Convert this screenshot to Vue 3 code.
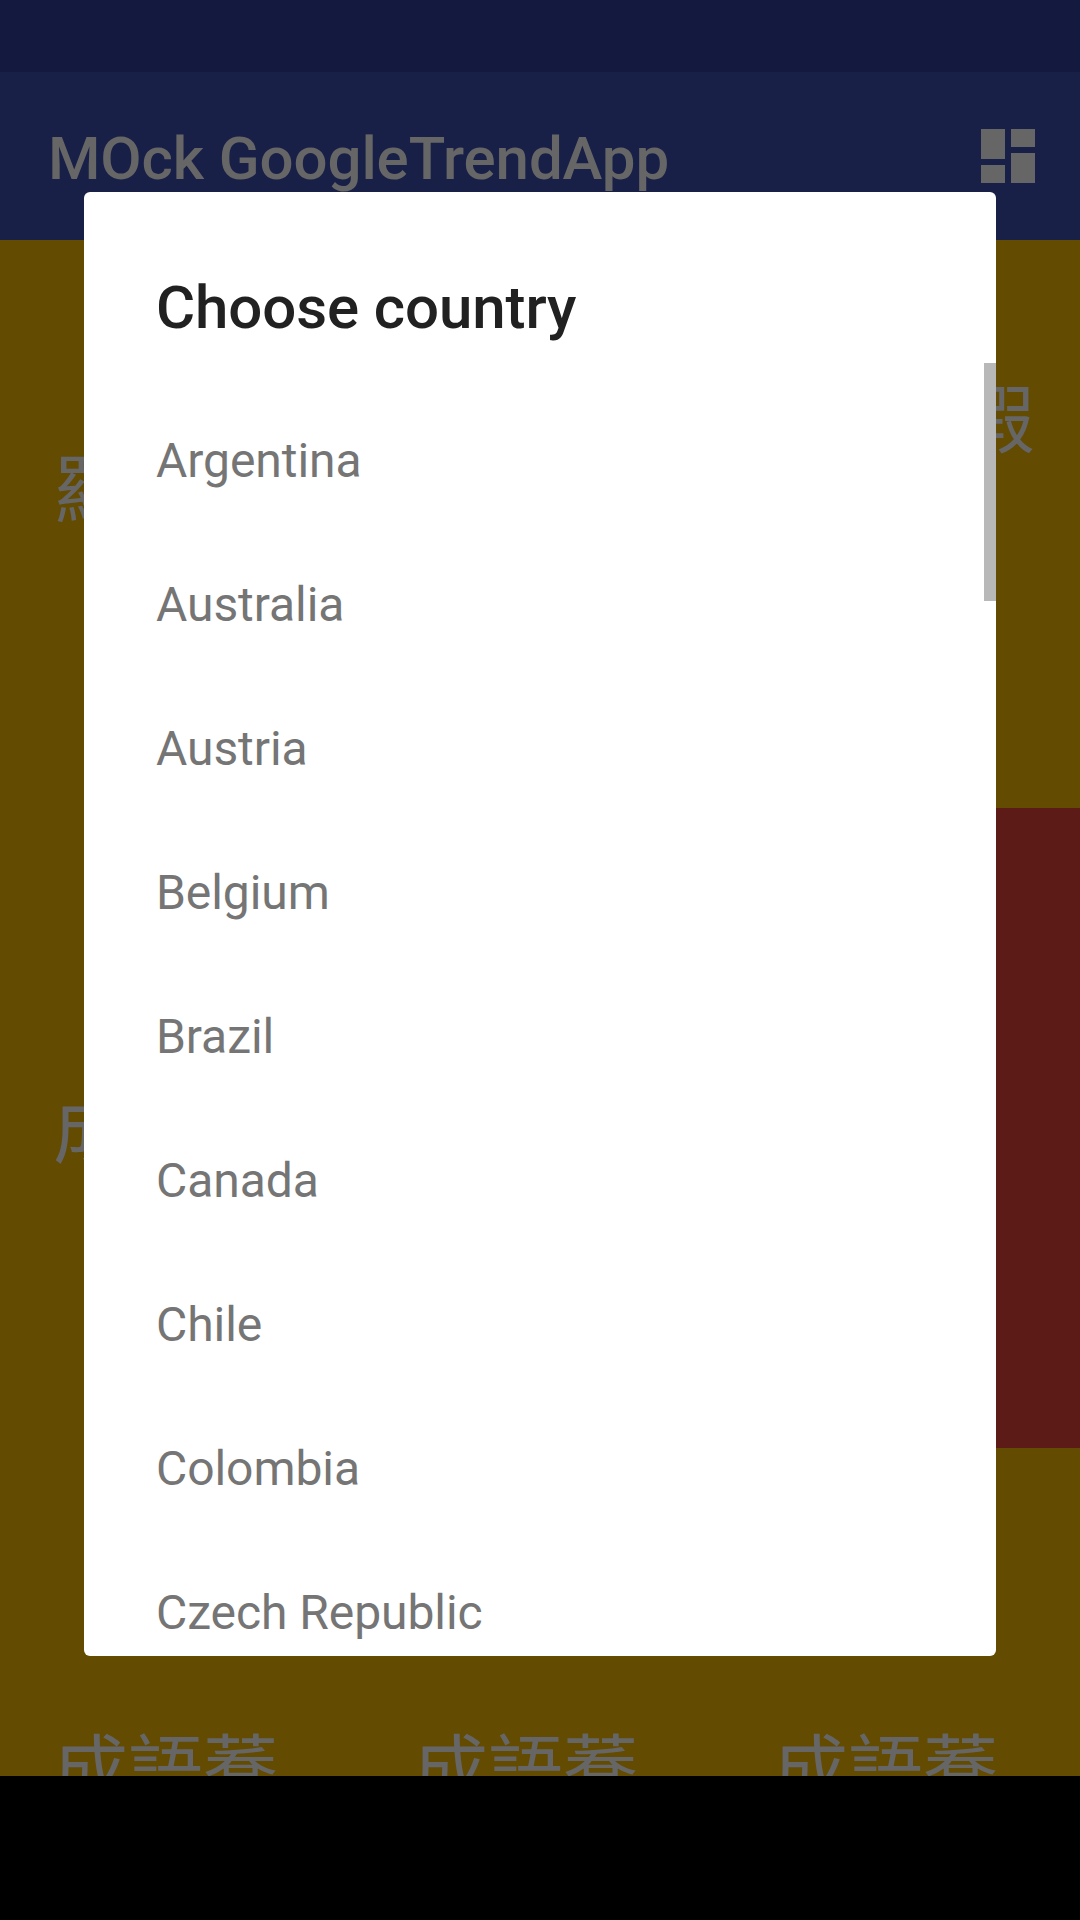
<script setup>
const countries = ['Argentina', 'Australia', 'Austria', 'Belgium', 'Brazil', 'Canada', 'Chile', 'Colombia', 'Czech Republic']
const tiles = ['成語蕎', '成語蕎', '成語蕎']
</script>

<template>
  <div class="screen">
    <div class="status"></div>
    <header class="bar">
      <h1>MOck GoogleTrendApp</h1>
      <svg class="dash" viewBox="0 0 54 54"><path d="M0 0h24v30H0zM30 0h24v18H30zM0 36h24v18H0zM30 24h24v30H30z" /></svg>
    </header>
    <main class="grid">
      <span class="word w1">羅</span>
      <span class="word w2">假</span>
      <span class="word w3">成</span>
      <div class="red"></div>
      <div class="row"><span v-for="(t, i) in tiles" :key="i" class="tile">{{ t }}</span></div>
    </main>
    <footer class="nav"></footer>
    <section class="dialog">
      <h2>Choose country</h2>
      <ul><li v-for="c in countries" :key="c">{{ c }}</li></ul>
      <div class="thumb"></div>
    </section>
  </div>
</template>

<style>
body { margin: 0; background: #000; }
</style>
<style scoped>
.screen { position: relative; width: 1080px; height: 1920px; overflow: hidden; display: flex; flex-direction: column; font-family: Roboto, "Noto Sans CJK TC", sans-serif; }
.status { height: 72px; background: #13193f; flex: none; }
.bar { height: 168px; flex: none; box-sizing: border-box; background: #192048; padding: 0 45px 0 48px; display: flex; align-items: center; justify-content: space-between; color: #666; }
h1 { margin: 0; padding-top: 6px; font-size: 60px; font-weight: 500; line-height: 70px; letter-spacing: -0.1px; }
.dash { width: 54px; height: 54px; fill: #666; }
.grid { position: relative; height: 1536px; flex: none; background: #644b02; overflow: hidden; color: #666; font-size: 75px; line-height: 104px; }
.word { position: absolute; }
.w1 { left: 53px; top: 199px; }
.w2 { left: 960px; top: 129px; }
.w3 { left: 53px; top: 839px; }
.red { position: absolute; left: 720px; top: 568px; width: 360px; height: 640px; background: #5d1b17; }
.row { position: absolute; left: 0; top: 1479px; width: 1080px; display: flex; }
.tile { width: 360px; box-sizing: border-box; padding-left: 53px; }
.nav { height: 144px; background: #000; }
.dialog { position: absolute; left: 84px; top: 192px; width: 912px; height: 1464px; background: #fff; border-radius: 6px; overflow: hidden; }
h2 { margin: 0; padding: 81px 72px 22px; font-size: 60px; line-height: 70px; font-weight: 500; letter-spacing: -0.1px; color: #212121; }
ul { list-style: none; margin: 0; padding: 24px 0 0; }
li { height: 144px; line-height: 144px; padding-left: 72px; font-size: 48px; letter-spacing: -0.06px; color: #757575; }
.thumb { position: absolute; right: 0; top: 171px; width: 12px; height: 238px; background: #b8b8b8; }
</style>
